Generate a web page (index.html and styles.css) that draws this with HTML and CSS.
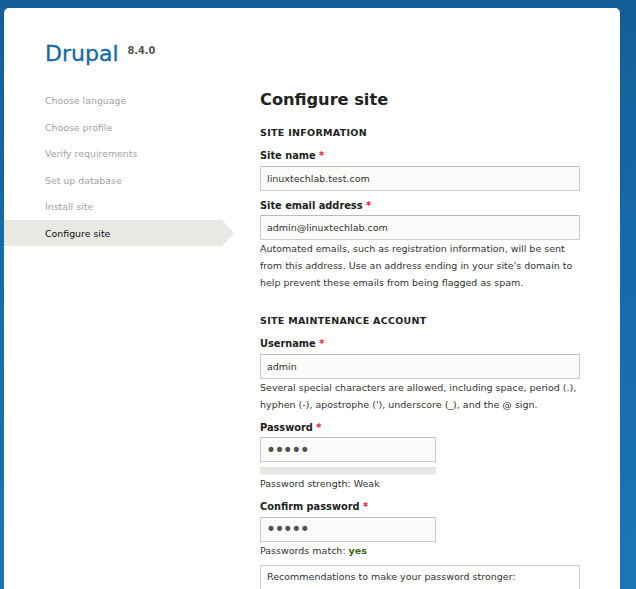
FILE: index.html
```html
<!DOCTYPE html>
<html lang="en">
<head>
  <meta charset="UTF-8">
  <meta name="viewport" content="width=device-width, initial-scale=1.0">
  <title>Configure site | Drupal</title>
  <link rel="stylesheet" href="styles.css">
</head>
<body>
  <div class="page">
    <div class="header">
      <span class="site-name">Drupal</span><span class="version">8.4.0</span>
    </div>
    <div class="layout">
      <ul class="steps">
        <li>Choose language</li>
        <li>Choose profile</li>
        <li>Verify requirements</li>
        <li>Set up database</li>
        <li>Install site</li>
        <li class="active">Configure site</li>
      </ul>
      <div class="content">
        <h1>Configure site</h1>
        <form>
          <h2 class="section-title">Site information</h2>
          <div class="form-item">
            <label for="site-name">Site name <span class="required">*</span></label>
            <input type="text" id="site-name" class="text-input" value="linuxtechlab.test.com">
          </div>
          <div class="form-item">
            <label for="site-mail">Site email address <span class="required">*</span></label>
            <input type="text" id="site-mail" class="text-input" value="admin@linuxtechlab.com">
            <div class="description">Automated emails, such as registration information, will be sent from this address. Use an address ending in your site's domain to help prevent these emails from being flagged as spam.</div>
          </div>

          <h2 class="section-title section-gap">Site maintenance account</h2>
          <div class="form-item">
            <label for="username">Username <span class="required">*</span></label>
            <input type="text" id="username" class="text-input" value="admin">
            <div class="description">Several special characters are allowed, including space, period (.), hyphen (-), apostrophe ('), underscore (_), and the @ sign.</div>
          </div>
          <div class="form-item">
            <label for="pass1">Password <span class="required">*</span></label>
            <input type="password" id="pass1" class="text-input short" value="admin">
            <div class="strength-bar"></div>
            <div class="description">Password strength: Weak</div>
          </div>
          <div class="form-item">
            <label for="pass2">Confirm password <span class="required">*</span></label>
            <input type="password" id="pass2" class="text-input short" value="admin">
            <div class="description match">Passwords match: <span class="ok">yes</span></div>
          </div>
          <div class="suggestions">
            <p>Recommendations to make your password stronger:</p>
          </div>
        </form>
      </div>
    </div>
  </div>
</body>
</html>
```

FILE: styles.css
```css
html, body {
  height: 100%;
  overflow: hidden;
}
body {
  margin: 0;
  font-family: "DejaVu Sans", Verdana, sans-serif;
  font-size: 9.5px;
  color: #333;
  background: linear-gradient(to bottom, #135e99 0%, #1769a7 40%, #1b75b5 100%);
}
.page {
  margin: 8px 16px 0 4px;
  height: 581px;
  overflow: hidden;
  background-color: #fff;
  border-radius: 5px 5px 0 0;
}
.header {
  padding: 35px 0 0 41px;
  box-sizing: border-box;
  height: 79px;
}
.site-name {
  font-size: 22px;
  line-height: 22px;
  color: #1469a6;
  -webkit-text-stroke: 0.3px #1469a6;
}
.version {
  margin-left: 9px;
  font-size: 9.8px;
  font-weight: bold;
  color: #555;
  vertical-align: 7px;
}
.layout {
  display: flex;
}
.steps {
  list-style: none;
  margin: 0;
  padding: 0;
  width: 256px;
  flex-shrink: 0;
}
.steps li {
  position: relative;
  width: 218px;
  height: 26.5px;
  line-height: 27.5px;
  padding-left: 41px;
  box-sizing: border-box;
  font-size: 9.4px;
  color: #a3a3a3;
}
.steps li.active {
  color: #111;
  background-color: #e8e8e4;
}
.steps li.active::after {
  content: "";
  position: absolute;
  left: 100%;
  top: 0;
  border-left: 12px solid #e8e8e4;
  border-top: 13.25px solid transparent;
  border-bottom: 13.25px solid transparent;
}
.content {
  width: 320px;
  padding-top: 3px;
}
h1 {
  margin: 0;
  font-size: 16.2px;
  line-height: 20px;
  color: #222;
}
.section-title {
  margin: 15px 0 0;
  font-size: 9.5px;
  line-height: 16px;
  letter-spacing: 0.3px;
  text-transform: uppercase;
  color: #222;
}
.section-title.section-gap {
  margin: 22px 0 2px;
}
.form-item {
  margin-top: 7px;
}
.form-item label {
  display: block;
  margin-bottom: 1.5px;
  font-size: 9.8px;
  line-height: 16px;
  font-weight: bold;
  color: #222;
}
.required {
  color: #e2162c;
}
.text-input {
  display: block;
  width: 320px;
  height: 25px;
  box-sizing: border-box;
  margin: 0;
  padding: 0 6px;
  border: 1px solid #ccc;
  border-top-color: #b9b9b9;
  border-radius: 1px;
  background-color: #fbfbf9;
  font-family: "DejaVu Sans", Verdana, sans-serif;
  font-size: 9.5px;
  color: #333;
}
.text-input.short {
  width: 176px;
  padding-left: 5px;
  font-size: 17px;
  color: #505050;
  letter-spacing: -1.6px;
}
.description {
  font-size: 9.5px;
  line-height: 17px;
  color: #333;
}
.description.match {
  line-height: 13px;
  margin-top: 2px;
}
.ok {
  font-weight: bold;
  color: #3e5e14;
}
.strength-bar {
  width: 176px;
  height: 8px;
  margin-top: 5px;
  background: linear-gradient(to bottom, #e3e3df, #ececea);
}
.suggestions {
  margin-top: 8px;
  height: 60px;
  padding: 2px 6px 6px;
  border: 1px solid #ccc;
  line-height: 17px;
  color: #333;
}
.suggestions p {
  margin: 0;
}
```
